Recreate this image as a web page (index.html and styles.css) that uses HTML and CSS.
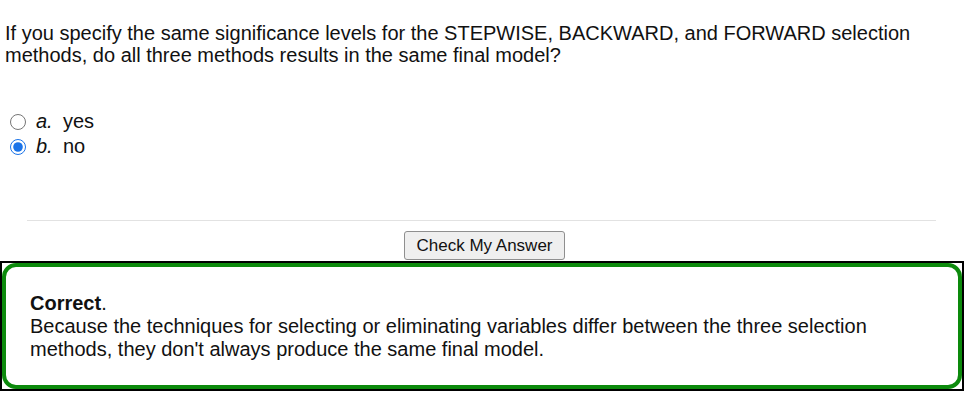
FILE: index.html
```html
<!DOCTYPE html>
<html>
<head>
<meta charset="utf-8">
<link rel="stylesheet" href="styles.css">
</head>
<body>
<div class="page">
  <p class="question">If you specify the same significance levels for the STEPWISE, BACKWARD, and FORWARD selection methods, do all three methods results in the same final model?</p>
  <div class="options">
    <label class="option"><input type="radio" name="q" class="radio"><span class="letter">a.</span><span class="answer">yes</span></label>
    <label class="option"><input type="radio" name="q" class="radio" checked><span class="letter">b.</span><span class="answer">no</span></label>
  </div>
  <hr class="divider">
  <div class="actions"><button class="check">Check My Answer</button></div>
  <div class="feedback">
    <div class="feedback-inner">
      <strong>Correct</strong>.<br>
      Because the techniques for selecting or eliminating variables differ between the three selection methods, they don't always produce the same final model.
    </div>
  </div>
</div>
</body>
</html>
```
FILE: styles.css
```css
html, body {
  margin: 0;
  padding: 0;
  background: #fff;
}
body {
  font-family: "Liberation Sans", Arial, sans-serif;
  font-size: 20px;
  color: #111;
}
.page {
  width: 964px;
}
.question {
  margin: 0;
  padding: 22px 0 0 5px;
  width: 920px;
  line-height: 22px;
}
.options {
  margin-top: 43px;
  display: flex;
  flex-direction: column;
}
.option {
  display: flex;
  align-items: center;
  height: 25px;
}
.radio {
  width: 16px;
  height: 16px;
  margin: 0 0 0 10px;
  accent-color: #1a73e8;
}
.letter {
  font-style: italic;
  margin-left: 10px;
  width: 27px;
}
.divider {
  border: 0;
  border-top: 1px solid #e2e2e2;
  margin: 61px 28px 0 27px;
  height: 0;
}
.actions {
  display: flex;
  justify-content: center;
  padding-left: 5px;
  margin-top: 10px;
}
.check {
  font-family: "Liberation Sans", Arial, sans-serif;
  font-size: 17px;
  color: #111;
  height: 29px;
  padding: 0 11px;
  background: #efefef;
  border: 1px solid #8f8f8f;
  border-radius: 3px;
}
.feedback {
  margin-top: 1px;
  border: 2px solid #000;
}
.feedback-inner {
  border: 4px solid #0c8a0c;
  border-radius: 14px;
  padding: 25px 24px 24px;
  line-height: 23px;
}
```
